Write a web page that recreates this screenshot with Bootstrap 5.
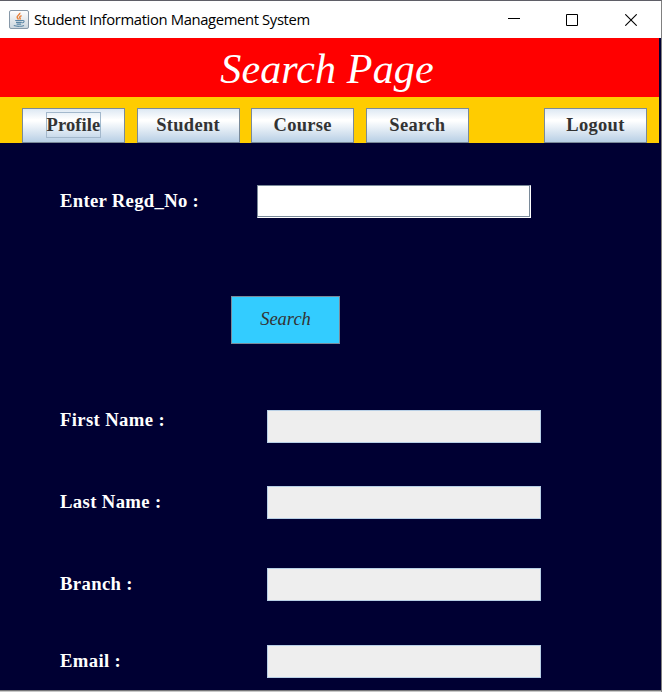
<!DOCTYPE html>
<html lang="en">
<head>
<meta charset="utf-8">
<meta name="viewport" content="width=device-width, initial-scale=1">
<title>Student Information Management System</title>
<link href="https://cdn.jsdelivr.net/npm/bootstrap@5.3.0/dist/css/bootstrap.min.css" rel="stylesheet">
<style>
html,body{height:692px;overflow:hidden}
body{background:#000033;font-family:"Liberation Serif",serif;line-height:1}
.app-window{width:662px;height:692px;border-top:1px solid #5f5f67;border-right:1px solid #808080}
.title-bar{height:37px;background:#fff;color:#000;font:14.8px/36px "Open Sans",sans-serif;padding-left:9px}
.title-text{margin-left:5px;margin-top:-1px;letter-spacing:-.36px;white-space:nowrap}
.win-controls{gap:46px;padding-right:24px}
.close-icon{margin-left:1px}
.banner{width:659px;height:59px;background:#f00;padding:3px 5px 0 0}
.banner h1{font-size:42px;font-style:italic;font-weight:400;line-height:1;color:#fff;letter-spacing:.15px}
.menu-strip{width:659px;height:46px;background:#fc0;padding:11px 12px 0 22px;gap:11.6px}
.menu-btn{width:103px;height:35px;border:1px solid #7a8a99;border-radius:0;padding:0 0 1px;font-size:18.5px;font-weight:700;color:#333;line-height:1;letter-spacing:.3px;background:linear-gradient(#dde8f3 0%,#fff 32%,#fff 36%,#b8cfe5 100%)}
.menu-btn .caption-box{height:26px;padding:3px 0 0;border:1px solid transparent;display:inline-block;letter-spacing:.1px;white-space:nowrap}
.menu-btn .focused{border-color:#a3b8cc}
.form-panel{padding-top:42px}
.entry{height:33px;padding-left:60px}
.entry label{width:207px;font-size:18.7px;font-weight:700;color:#fff;letter-spacing:.36px;white-space:pre}
.entry.query label{width:197px;letter-spacing:.3px}
.entry .form-control{width:274px;height:33px;border-radius:0;padding:0 4px;border:1px solid #b8cfe5;background:#eee}
.entry.query .form-control{background:#fff;border-color:#7a8a99 #fff #fff #7a8a99;box-shadow:inset -1px -1px #7a8a99}
.raised label{margin-top:-12px}
.gap-a{margin-bottom:43px}.gap-b{margin-bottom:49px}.gap-c{margin-bottom:44px}
.search-btn{width:109px;height:48px;margin:78px 0 66px 231px;background:#3cf;border:1px solid #7a8a99;border-radius:0;padding:0;color:#333;font-size:18.5px;font-style:italic}
.bottom-edge{height:2px;margin-top:12px;background:#c8c8c8;border-top:1px solid #77777a}
</style>
<script src="https://cdn.jsdelivr.net/npm/bootstrap@5.3.0/dist/js/bootstrap.bundle.min.js"></script>
</head>
<body>
<div class="app-window">
  <header class="title-bar d-flex align-items-center">
    <svg width="20" height="20" viewBox="0 0 20 20" aria-hidden="true">
      <defs><linearGradient id="tile" x2="0" y2="1"><stop stop-color="#fff"/><stop offset="1" stop-color="#cbd5dd"/></linearGradient></defs>
      <rect x=".5" y=".5" width="19" height="18" rx="1.5" fill="url(#tile)" stroke="#8798a8"/>
      <path d="M10.8 2.8c.7 1.8-3.3 2.6-2.6 4.6.2.8 1 1.2 1.3 2M12.6 5.6c-2 .8-2.3 1.6-1.6 2.4.5.6.2 1-.3 1.5" fill="none" stroke="#e8843f" stroke-width="1.5"/>
      <path d="M6.2 10.5h7.2M7 12.4h5.8M7.6 14.1h4.6M13.3 10.5c2.6-.4 2.2 2-.1 2.4M4.8 15.6c2.5 1 7.8 1 10.2-.2" fill="none" stroke="#5b86a5" stroke-width="1.1"/>
    </svg>
    <span class="title-text">Student Information Management System</span>
    <div class="win-controls d-flex align-items-center ms-auto">
      <svg width="12" height="12" aria-hidden="true"><path d="M0 4.5h12" stroke="#000"/></svg>
      <svg width="12" height="12" aria-hidden="true"><path d="M.5.5h11v11H.5z" fill="none" stroke="#000"/></svg>
      <svg class="close-icon" width="12" height="12" aria-hidden="true"><path d="M.3.3l11.4 11.4M11.7.3L.3 11.7" stroke="#000" stroke-width="1.1"/></svg>
    </div>
  </header>
  <div class="banner d-flex align-items-center justify-content-center"><h1 class="m-0">Search Page</h1></div>
  <nav class="menu-strip d-flex">
    <button class="btn menu-btn"><span class="caption-box focused">Profile</span></button>
    <button class="btn menu-btn">Student</button>
    <button class="btn menu-btn">Course</button>
    <button class="btn menu-btn">Search</button>
    <button class="btn menu-btn ms-auto">Logout</button>
  </nav>
  <main class="form-panel">
    <div class="entry query d-flex align-items-center"><label for="regd">Enter Regd_No :</label><input id="regd" class="form-control"></div>
    <button class="btn search-btn d-block">Search</button>
    <div class="entry raised gap-a d-flex align-items-center"><label for="first">First Name :</label><input id="first" class="form-control" readonly></div>
    <div class="entry gap-b d-flex align-items-center"><label for="last">Last Name :</label><input id="last" class="form-control" readonly></div>
    <div class="entry gap-c d-flex align-items-center"><label for="branch">Branch :</label><input id="branch" class="form-control" readonly></div>
    <div class="entry d-flex align-items-center"><label for="email">Email :</label><input id="email" class="form-control" readonly></div>
  </main>
  <div class="bottom-edge"></div>
</div>
</body>
</html>
